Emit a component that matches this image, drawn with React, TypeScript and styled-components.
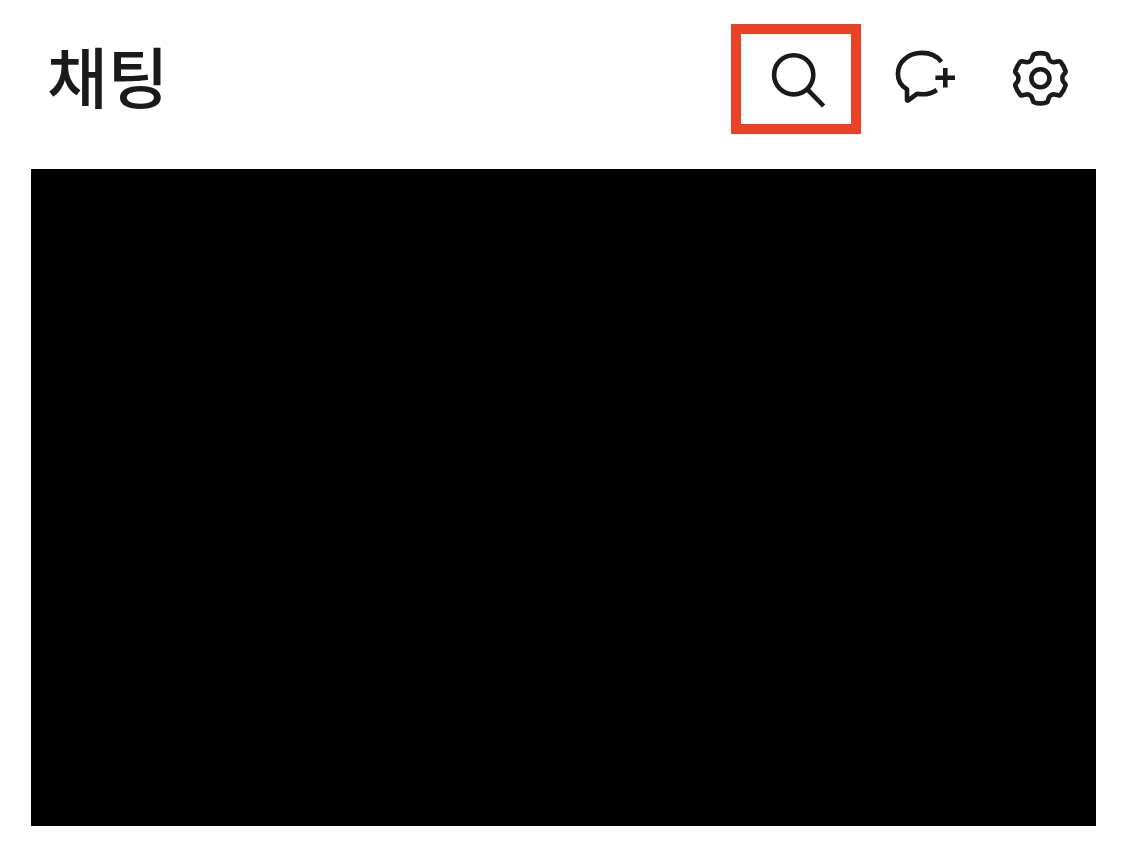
import React from 'react';
import styled, { createGlobalStyle } from 'styled-components';

const GlobalStyle = createGlobalStyle`
  *, *::before, *::after { box-sizing: border-box; }
  body {
    margin: 0;
    background: #fff;
    color: #1a1a1b;
    font-family: "Noto Sans CJK KR", sans-serif;
  }
`;

const Page = styled.div`
  display: flex;
  flex-direction: column;
  gap: 35px;
  min-height: 100vh;
  padding: 24px 29px 16px 31px;
`;

const Header = styled.header`
  display: flex;
  align-items: flex-start;
  justify-content: space-between;
  height: 110px;
  padding: 0 1px 0 16px;
`;

const Title = styled.h1`
  margin: 0;
  font-size: 66px;
  line-height: 100px;
  font-weight: 500;
`;

const Actions = styled.nav`
  display: flex;
  gap: 7px;
`;

const IconButton = styled.button<{ $highlighted?: boolean }>`
  display: flex;
  align-items: center;
  justify-content: center;
  width: ${({ $highlighted }) => ($highlighted ? 130 : 110)}px;
  height: 110px;
  padding: 0;
  border: ${({ $highlighted }) => ($highlighted ? '10px solid #eb4127' : '0')};
  background: transparent;
  color: inherit;
  cursor: pointer;
`;

const Icon = styled.svg`
  flex: none;
  fill: none;
  stroke: currentColor;
  stroke-width: 4.6;
`;

const ChatArea = styled.main`
  flex: 1;
  background: #000;
`;

export default function App() {
  return (
    <>
      <GlobalStyle />
      <Page>
        <Header>
          <Title>채팅</Title>
          <Actions>
            <IconButton type="button" aria-label="검색" $highlighted>
              <Icon width="60" height="60" viewBox="0 0 60 60" aria-hidden="true">
                <circle cx="27.7" cy="25.8" r="19.6" />
                <path d="M41.4 40.4 57.6 57" />
              </Icon>
            </IconButton>
            <IconButton type="button" aria-label="새 채팅">
              <Icon width="70" height="64" viewBox="-2 3 70 64" aria-hidden="true">
                <path
                  strokeLinejoin="round"
                  d="M51.4 17.8C47 12 40 8.9 32 8.9C18 8.9 7.9 18 7.9 30C7.9 36.5 11 41.8 17 45.3V56Q17.2 57 18.2 56.3L27 49.8C34 51 41 50 46.8 46"
                />
                <path d="M55.3 24V43.600M45.4 33.7H65" />
              </Icon>
            </IconButton>
            <IconButton type="button" aria-label="설정">
              <Icon width="60" height="60" viewBox="0 1 60 60" aria-hidden="true">
                <path
                  strokeLinejoin="round"
                  d="M24.2 6.2Q30.4 4 36.6 6.2Q37.4 6.5 37.7 7.400L38.900 11Q39.300 12.600 41.600 13.700Q43.200 14.500 44.900 14.100L49.200 13.200Q50 13.100 50.500 13.800Q54 18 55.500 23Q55.800 24 55.200 24.700L53.300 27Q52.400 28 52.400 30.300Q52.400 32.600 53.300 33.600L55.200 35.900Q55.800 36.600 55.500 37.600Q54 42.600 50.500 46.800Q50 47.500 49.200 47.400L44.900 46.500Q43.200 46.100 41.600 46.900Q39.300 48 38.900 49.600L37.700 53.200Q37.400 54.100 36.600 54.400Q30.400 56.600 24.200 54.400Q23.400 54.100 23.100 53.200L21.900 49.600Q21.500 48 19.200 46.900Q17.600 46.100 15.900 46.500L11.600 47.400Q10.800 47.500 10.300 46.800Q6.800 42.600 5.300 37.600Q5 36.600 5.600 35.900L7.500 33.600Q8.400 32.600 8.400 30.300Q8.400 28 7.500 27L5.600 24.700Q5 24 5.300 23Q6.800 18 10.300 13.800Q10.800 13.100 11.600 13.200L15.900 14.100Q17.600 14.500 19.200 13.700Q21.500 12.600 21.900 11L23.100 7.400Q23.400 6.500 24.200 6.200Z"
                />
                <circle cx="30.4" cy="30.3" r="9" />
              </Icon>
            </IconButton>
          </Actions>
        </Header>
        <ChatArea aria-label="채팅 목록" />
      </Page>
    </>
  );
}
